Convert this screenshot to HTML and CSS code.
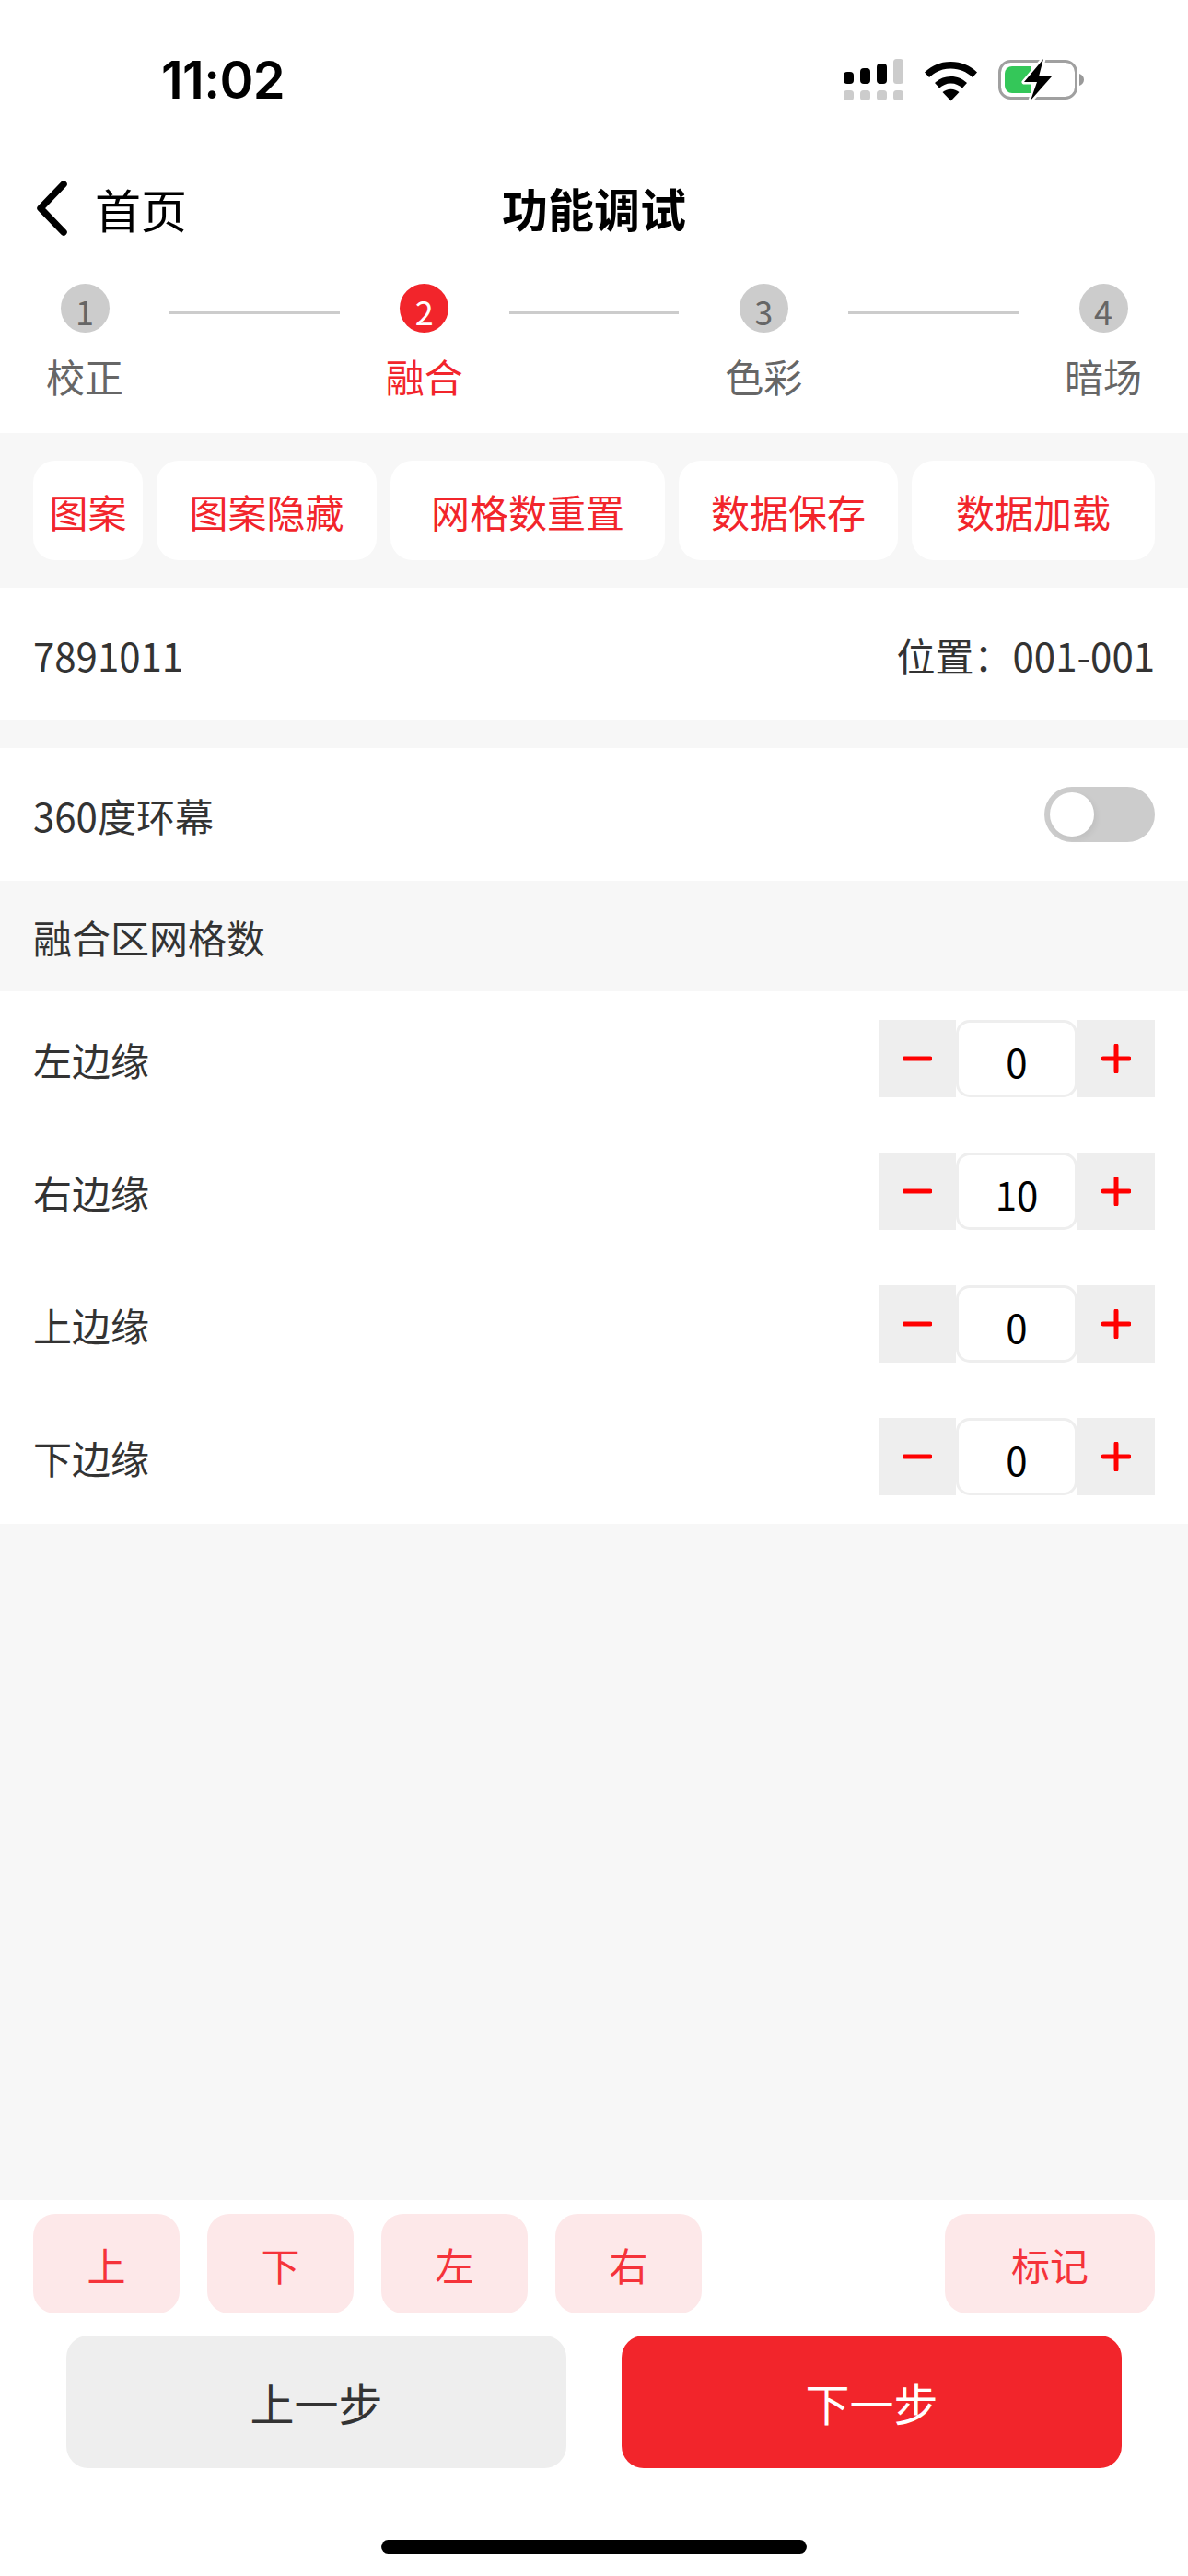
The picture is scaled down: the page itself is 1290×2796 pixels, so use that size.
FILE: index.html
```html
<!DOCTYPE html>
<html lang="zh-CN">
<head>
  <meta charset="UTF-8" />
  <title>功能调试</title>
  <link rel="stylesheet" href="styles.css">
</head>
<body>
  <div class="phone">

    <!-- status bar -->
    <div class="status-bar">
      <span class="clock">11:02</span>
      <svg class="status-icons" width="261" height="48" viewBox="0 0 261 48">
        <rect x="0" y="15" width="11" height="13" rx="4" fill="#000"/>
        <rect x="18" y="11" width="11" height="17" rx="4" fill="#000"/>
        <rect x="36" y="6" width="11" height="22" rx="4" fill="#000"/>
        <rect x="54" y="1" width="11" height="27" rx="3.500" fill="#ccc"/>
        <rect x="0" y="35" width="11" height="11" rx="3.500" fill="#ccc"/>
        <rect x="18" y="35" width="11" height="11" rx="3.500" fill="#ccc"/>
        <rect x="36" y="35" width="11" height="11" rx="3.500" fill="#ccc"/>
        <rect x="54" y="35" width="11" height="11" rx="3.500" fill="#ccc"/>
        <path d="M88 15.500c8-7.500 17-11.500 28.500-11.500s20.500 4 28.500 11.500l-5 5.500c-6.500-6-14-9.500-23.500-9.500s-17 3.500-23.500 9.500z" fill="#000"/>
        <path d="M99 27c5-4.500 10.500-7 17.500-7s12.500 2.500 17.500 7l-5 5.500c-3.500-3-7.500-5-12.500-5s-9 2-12.500 5z" fill="#000"/>
        <path d="M107.500 37c2.500-2 5.500-3.300 9-3.300s6.500 1.300 9 3.300l-9 9.500z" fill="#000"/>
        <rect x="169.500" y="3.500" width="83" height="40" rx="12" fill="none" stroke="#a0a0a0" stroke-width="3"/>
        <path d="M256 17c3 1 5 3.500 5 6.500s-2 5.500-5 6.500z" fill="#9a9a9a"/>
        <path d="M183 9h21v29h-21a8 8 0 0 1-8-8v-13a8 8 0 0 1 8-8z" fill="#34c759"/>
        <path d="M217 1 196 26h14l-7 20 23-26h-14z" fill="#000" stroke="#fff" stroke-width="5" stroke-linejoin="round" paint-order="stroke"/>
      </svg>
    </div>

    <!-- nav -->
    <div class="nav">
      <div class="nav-back">
        <svg width="36" height="60" viewBox="0 0 36 60">
          <path d="M31 4 6 30l25 26" fill="none" stroke="#000" stroke-width="7.500" stroke-linecap="round" stroke-linejoin="round"/>
        </svg>
        <span>首页</span>
      </div>
      <div class="nav-title">功能调试</div>
    </div>

    <!-- steps -->
    <div class="steps">
      <div class="step"><span class="step-num">1</span><span class="step-name">校正</span></div>
      <div class="step-line"></div>
      <div class="step active"><span class="step-num">2</span><span class="step-name">融合</span></div>
      <div class="step-line"></div>
      <div class="step"><span class="step-num">3</span><span class="step-name">色彩</span></div>
      <div class="step-line"></div>
      <div class="step"><span class="step-num">4</span><span class="step-name">暗场</span></div>
    </div>

    <!-- top buttons -->
    <div class="toolbar">
      <button class="tool tool-pattern">图案</button>
      <button class="tool tool-hide">图案隐藏</button>
      <button class="tool tool-reset">网格数重置</button>
      <button class="tool tool-save">数据保存</button>
      <button class="tool tool-load">数据加载</button>
    </div>

    <div class="row info-row">
      <span>7891011</span>
      <span>位置：001-001</span>
    </div>

    <div class="row ring-row">
      <span>360度环幕</span>
      <div class="switch"><div class="switch-knob"></div></div>
    </div>

    <div class="section-title">融合区网格数</div>

    <div class="grid-list">
      <div class="row grid-row">
        <span>左边缘</span>
        <div class="stepper">
          <button class="stepper-btn"><svg width="32" height="32" viewBox="0 0 32 32"><path d="M2 16h28" stroke="#f00" stroke-width="5" stroke-linecap="round"/></svg></button>
          <div class="stepper-val">0</div>
          <button class="stepper-btn"><svg width="32" height="32" viewBox="0 0 32 32"><path d="M2 16h28M16 2v28" stroke="#f00" stroke-width="5" stroke-linecap="round"/></svg></button>
        </div>
      </div>
      <div class="row grid-row">
        <span>右边缘</span>
        <div class="stepper">
          <button class="stepper-btn"><svg width="32" height="32" viewBox="0 0 32 32"><path d="M2 16h28" stroke="#f00" stroke-width="5" stroke-linecap="round"/></svg></button>
          <div class="stepper-val">10</div>
          <button class="stepper-btn"><svg width="32" height="32" viewBox="0 0 32 32"><path d="M2 16h28M16 2v28" stroke="#f00" stroke-width="5" stroke-linecap="round"/></svg></button>
        </div>
      </div>
      <div class="row grid-row">
        <span>上边缘</span>
        <div class="stepper">
          <button class="stepper-btn"><svg width="32" height="32" viewBox="0 0 32 32"><path d="M2 16h28" stroke="#f00" stroke-width="5" stroke-linecap="round"/></svg></button>
          <div class="stepper-val">0</div>
          <button class="stepper-btn"><svg width="32" height="32" viewBox="0 0 32 32"><path d="M2 16h28M16 2v28" stroke="#f00" stroke-width="5" stroke-linecap="round"/></svg></button>
        </div>
      </div>
      <div class="row grid-row">
        <span>下边缘</span>
        <div class="stepper">
          <button class="stepper-btn"><svg width="32" height="32" viewBox="0 0 32 32"><path d="M2 16h28" stroke="#f00" stroke-width="5" stroke-linecap="round"/></svg></button>
          <div class="stepper-val">0</div>
          <button class="stepper-btn"><svg width="32" height="32" viewBox="0 0 32 32"><path d="M2 16h28M16 2v28" stroke="#f00" stroke-width="5" stroke-linecap="round"/></svg></button>
        </div>
      </div>
    </div>

    <div class="filler"></div>

    <!-- bottom -->
    <div class="bottom">
      <div class="dir-row">
        <button class="dir">上</button>
        <button class="dir">下</button>
        <button class="dir">左</button>
        <button class="dir">右</button>
        <button class="dir dir-mark">标记</button>
      </div>
      <div class="step-btns">
        <button class="big-btn big-prev">上一步</button>
        <button class="big-btn big-next">下一步</button>
      </div>
      <div class="home-wrap"><div class="home-bar"></div></div>
    </div>

  </div>
</body>
</html>
```

FILE: styles.css
```css
* {
  box-sizing: border-box;
}

body {
  margin: 0;
  background: #fff;
  font-family: "Noto Sans CJK SC", "Noto Sans", sans-serif;
  color: #333;
  font-size: 42px;
}

button {
  font-family: inherit;
  border: none;
  padding: 0;
  cursor: pointer;
}

.phone {
  width: 1290px;
  height: 2796px;
  display: flex;
  flex-direction: column;
  overflow: hidden;
  background: #f7f7f7;
}

/* status bar */
.status-bar {
  height: 170px;
  flex: none;
  background: #fff;
  display: flex;
  justify-content: space-between;
  align-items: flex-start;
  padding: 63px 113px 0 175px;
}

.clock {
  font-family: Inter, sans-serif;
  font-weight: 600;
  font-size: 56px;
  line-height: 48px;
  letter-spacing: -0.6px;
  color: #000;
}

/* nav */
.nav {
  height: 116px;
  flex: none;
  background: #fff;
  position: relative;
  display: flex;
  align-items: center;
  justify-content: center;
  padding-bottom: 6px;
}

.nav-back {
  position: absolute;
  left: 38px;
  top: 0;
  height: 100%;
  display: flex;
  align-items: center;
  gap: 29px;
  font-size: 50px;
  color: #000;
  padding-bottom: 4px;
}

.nav-title {
  font-size: 50px;
  font-weight: 700;
  color: #000;
}

/* steps */
.steps {
  height: 184px;
  flex: none;
  background: #fff;
  display: flex;
  align-items: flex-start;
  padding: 22px 50px 0;
}

.step {
  width: 84px;
  flex: none;
  display: flex;
  flex-direction: column;
  align-items: center;
  color: #666;
}

.step-num {
  width: 53px;
  height: 53px;
  border-radius: 50%;
  background: #ccc;
  display: flex;
  align-items: center;
  justify-content: center;
  padding-top: 4px;
  font-size: 36px;
  line-height: 1;
}

.step-name {
  margin-top: 16px;
  line-height: 62px;
  white-space: nowrap;
}

.step.active {
  color: #f2252b;
}

.step.active .step-num {
  background: #f2252b;
  color: #fff;
}

.step-line {
  flex: 1;
  height: 3px;
  margin: 30px 50px 0;
  background: #ccc;
}

/* tool buttons */
.toolbar {
  height: 168px;
  flex: none;
  background: #f7f7f7;
  display: flex;
  align-items: center;
  justify-content: space-between;
  padding: 0 36px;
}

.tool {
  height: 108px;
  border-radius: 24px;
  background: #fff;
  color: #f2252b;
  font-size: 42px;
}

.tool-pattern { width: 119px; }
.tool-hide { width: 239px; }
.tool-reset { width: 298px; }
.tool-save { width: 238px; }
.tool-load { width: 264px; }

/* rows */
.row {
  flex: none;
  background: #fff;
  display: flex;
  align-items: center;
  justify-content: space-between;
  padding: 0 36px;
}

.info-row {
  height: 144px;
}

.ring-row {
  height: 144px;
  margin-top: 30px;
}

.switch {
  width: 120px;
  height: 60px;
  border-radius: 30px;
  background: #ccc;
  padding: 6px;
}

.switch-knob {
  width: 48px;
  height: 48px;
  border-radius: 50%;
  background: #fff;
  box-shadow: 3px 3px 6px rgba(0,0,0,0.06);
}

.section-title {
  height: 120px;
  flex: none;
  background: #f7f7f7;
  display: flex;
  align-items: center;
  padding: 0 36px;
}

.grid-list {
  background: #fff;
  padding: 1px 0 1px;
}

.grid-row {
  height: 144px;
}

.stepper {
  display: flex;
  height: 84px;
}

.stepper-btn {
  width: 84px;
  height: 84px;
  background: #eee;
  display: flex;
  align-items: center;
  justify-content: center;
}

.stepper-val {
  width: 132px;
  height: 84px;
  border: 3px solid #eee;
  border-radius: 15px;
  display: flex;
  align-items: center;
  justify-content: center;
  padding-top: 4px;
  color: #000;
}

.filler {
  flex: 1;
  background: #f7f7f7;
}

/* bottom */
.bottom {
  height: 408px;
  flex: none;
  background: #fff;
  padding-top: 15px;
}

.dir-row {
  display: flex;
  gap: 30px;
  padding: 0 36px;
}

.dir {
  width: 159px;
  height: 108px;
  border-radius: 24px;
  background: #fde8e9;
  color: #f5333a;
  font-size: 42px;
}

.dir-mark {
  width: 228px;
  margin-left: auto;
}

.step-btns {
  display: flex;
  justify-content: space-between;
  padding: 0 72px;
  margin-top: 24px;
}

.big-btn {
  width: 543px;
  height: 144px;
  border-radius: 24px;
  font-size: 48px;
}

.big-prev {
  background: #eee;
  color: #333;
}

.big-next {
  background: #f2252b;
  color: #fff;
}

.home-wrap {
  display: flex;
  justify-content: center;
  margin-top: 78px;
}

.home-bar {
  width: 462px;
  height: 15px;
  border-radius: 8px;
  background: #000;
}
```
